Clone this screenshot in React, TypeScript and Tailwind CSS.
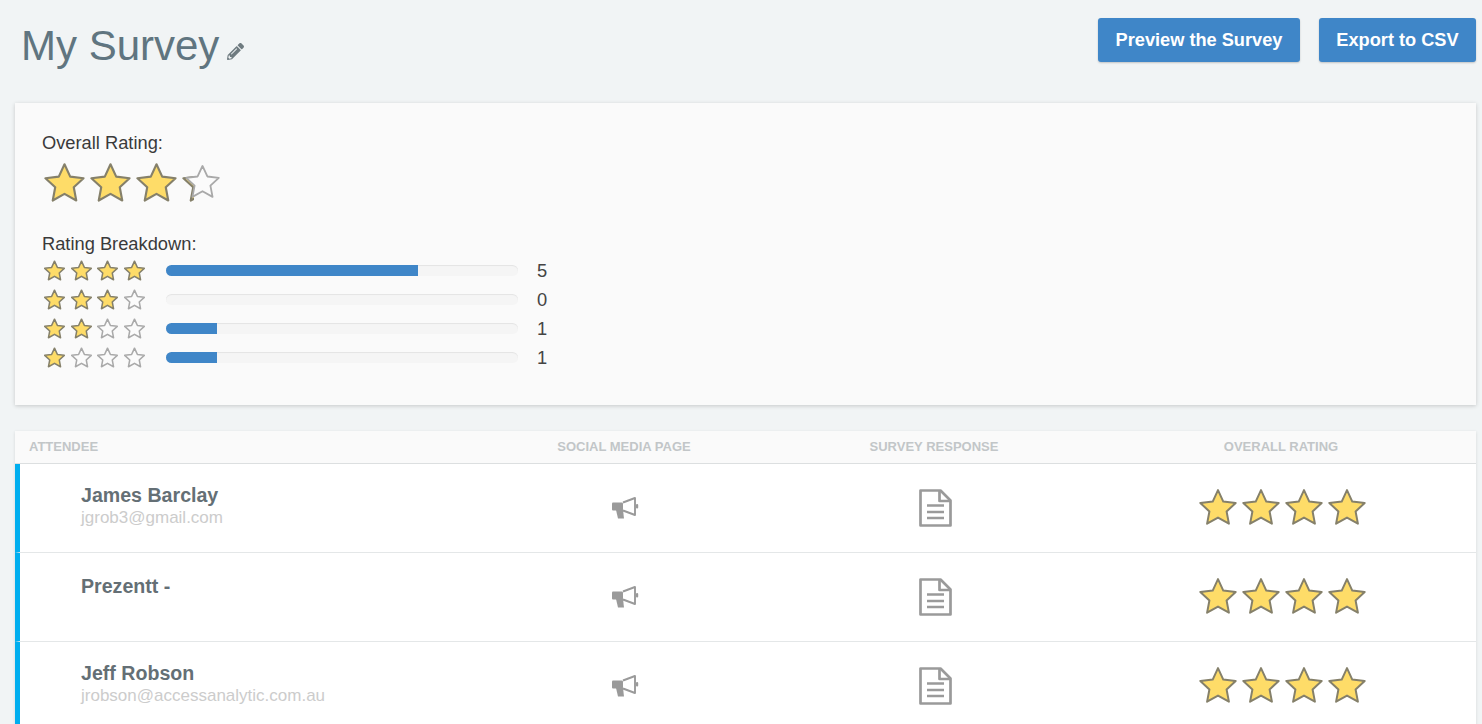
import { FaPencilAlt } from "react-icons/fa";

const STAR = "12,1.6 15.2,8.5 22.7,9.4 17.2,14.5 18.6,21.9 12,18.2 5.4,21.9 6.8,14.5 1.3,9.4 8.8,8.5";

function Star({ size, filled }: { size: number; filled: boolean }) {
  return (
    <svg width={size} height={size} viewBox="0.5 0.8 23 22" className="shrink-0">
      <polygon
        points={STAR}
        fill={filled ? "#fedc68" : "#fbfbfb"}
        stroke={filled ? "#85806a" : "#a9a9a9"}
        strokeWidth={size < 25 ? 1.7 : 1.2}
        strokeLinejoin="round"
      />
    </svg>
  );
}

function Stars({ count, size, className }: { count: number; size: number; className: string }) {
  return (
    <div className={`flex ${className}`}>
      {[0, 1, 2, 3].map((i) => (
        <Star key={i} size={size} filled={i < count} />
      ))}
    </div>
  );
}

function Bullhorn() {
  return (
    <svg width="28" height="23" viewBox="0 0 28 23" className="text-[#9a9a9a]">
      <rect x="0" y="5.5" width="11" height="8" rx="1" fill="currentColor" />
      <path d="M4 13h7l1 8.5H6z" fill="currentColor" />
      <path d="M11 5.5 23 1v17l-12-4.5" fill="#fff" stroke="currentColor" strokeWidth="1.9" strokeLinejoin="round" />
      <rect x="24" y="7" width="2.2" height="4.5" rx="1" fill="currentColor" />
    </svg>
  );
}

function FileDoc() {
  return (
    <svg width="33" height="38" viewBox="0 0 33 38" fill="none" stroke="#9a9a9a" strokeWidth="2.7" strokeLinejoin="round">
      <path d="M1.5 1.5h20l10 10v25h-30z" />
      <path d="M20.5 1.5v10.5h11" />
      <path d="M8 16.5h17M8 23h17M8 29h17" strokeWidth="2.4" />
    </svg>
  );
}

const breakdown = [
  { stars: 4, count: 5, fill: "w-[252px]" },
  { stars: 3, count: 0, fill: "w-0" },
  { stars: 2, count: 1, fill: "w-[51px]" },
  { stars: 1, count: 1, fill: "w-[51px]" },
];

const attendees = [
  { name: "James Barclay", email: "jgrob3@gmail.com", pad: "pt-5" },
  { name: "Prezentt -", email: "", pad: "pt-[22px]" },
  { name: "Jeff Robson", email: "jrobson@accessanalytic.com.au", pad: "pt-5" },
];

export default function App() {
  return (
    <div className="h-[724px] overflow-hidden bg-[#f1f4f5] pl-[15px] pr-[6px] font-['Liberation_Sans',Arial,sans-serif]">
      {/* Header */}
      <div className="flex h-[103px] items-start justify-between">
        <div className="flex items-center gap-[8px] pl-[6px] pt-[21px]">
          <h1 className="text-[42px] leading-[50px] font-normal text-[#607580]">My Survey</h1>
          <FaPencilAlt className="mt-[11px] text-[17px] text-[#6f7b80]" />
        </div>
        <div className="flex gap-[19px] pt-[18px]">
          <button className="h-[44px] w-[202px] rounded-[3px] bg-[#3f86c8] pt-px text-[18.2px] font-bold text-white shadow-[0_1px_2px_rgba(0,0,0,0.2)]">
            Preview the Survey
          </button>
          <button className="h-[44px] w-[157px] rounded-[3px] bg-[#3f86c8] pt-px text-[18.2px] font-bold text-white shadow-[0_1px_2px_rgba(0,0,0,0.2)]">
            Export to CSV
          </button>
        </div>
      </div>

      {/* Rating summary */}
      <section className="h-[302px] bg-[#fafafa] pl-[27px] pt-[29px] text-[18.3px] text-[#3a3a3a] shadow-[0_1px_4px_rgba(0,0,0,0.18)]">
        <p className="leading-[22px]">Overall Rating:</p>
        <div className="mt-[8px] flex h-[40px] items-center gap-[5px] pl-[2px]">
          <Star size={41} filled />
          <Star size={41} filled />
          <Star size={41} filled />
          <div className="relative h-[41px] w-[38px]">
            <div className="absolute left-0 top-0 w-[12px] overflow-hidden">
              <Star size={41} filled />
            </div>
            <div className="absolute left-[3px] top-[2px]">
              <Star size={35} filled={false} />
            </div>
          </div>
        </div>
        <p className="mt-[31px] leading-[22px]">Rating Breakdown:</p>
        <div className="mt-[1px]">
          {breakdown.map((row) => (
            <div key={row.stars} className="flex h-[29px] items-center">
              <Stars count={row.stars} size={21} className="w-[124px] gap-[5.7px] pl-[2px]" />
              <div className="h-[11px] w-[352px] overflow-hidden rounded-full bg-[#f5f5f5] shadow-[inset_0_1px_1px_rgba(0,0,0,0.07)]">
                <div className={`h-full bg-[#3f86c8] ${row.fill}`} />
              </div>
              <span className="ml-[19px] text-[#444]">{row.count}</span>
            </div>
          ))}
        </div>
      </section>

      {/* Attendee table */}
      <section className="mt-[26px] bg-white shadow-[0_1px_3px_rgba(0,0,0,0.12)]">
        <div className="grid h-[33px] grid-cols-[451px_316px_304px_390px] items-center border-b border-[#dcdfe0] bg-[#fafafa] text-center text-[13px] font-bold uppercase text-[#c2c6c8]">
          <div className="pl-[14px] text-left">Attendee</div>
          <div>Social Media Page</div>
          <div>Survey Response</div>
          <div>Overall Rating</div>
        </div>
        {attendees.map((a) => (
          <div
            key={a.name}
            className="grid h-[89px] grid-cols-[451px_316px_304px_390px] items-center border-b border-l-[5px] border-b-[#e4e7e8] border-l-[#00aeef]"
          >
            <div className={`h-full pl-[61px] ${a.pad}`}>
              <div className="text-[19.6px] leading-[22px] font-bold text-[#646f75]">{a.name}</div>
              <div className="pt-px text-[17px] leading-[22px] text-[#cccccc]">{a.email}</div>
            </div>
            <div className="flex justify-center pr-[6px]">
              <Bullhorn />
            </div>
            <div className="flex justify-center pr-[8px]">
              <FileDoc />
            </div>
            <div className="flex justify-center pb-[2px] pr-[8px]">
              <Stars count={4} size={38} className="gap-[5px]" />
            </div>
          </div>
        ))}
      </section>
    </div>
  );
}
